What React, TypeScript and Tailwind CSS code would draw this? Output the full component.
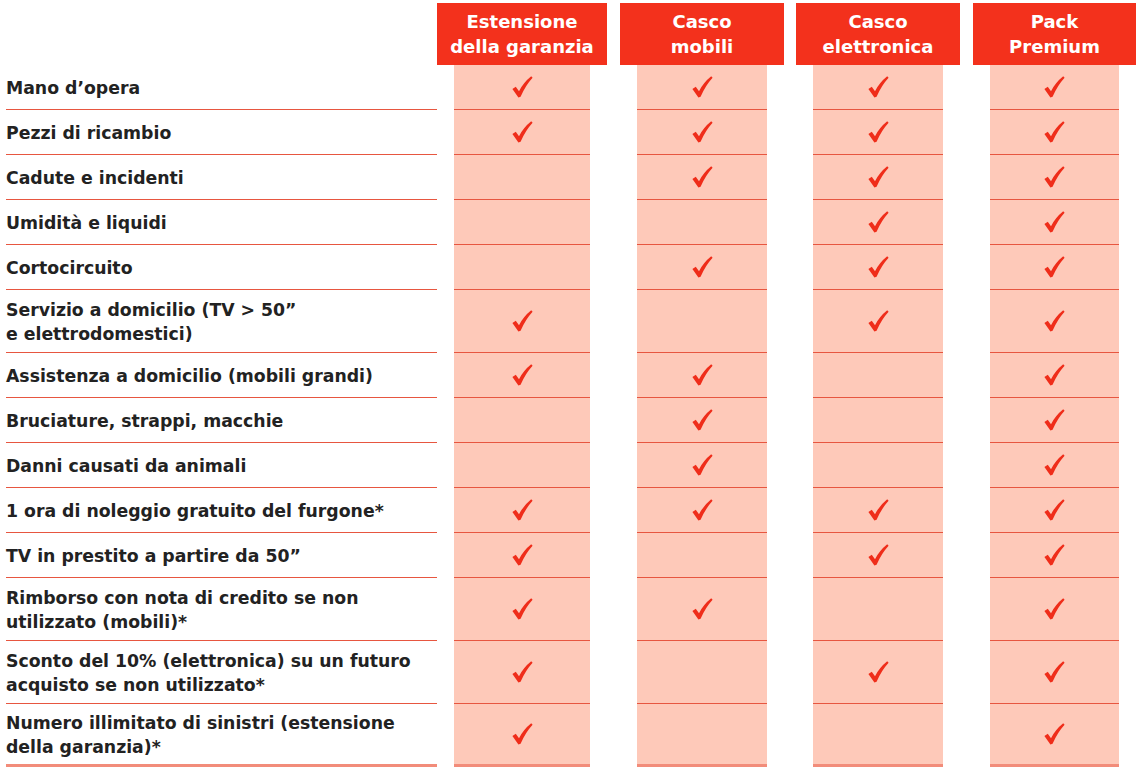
import React from 'react';

const plans = ['Estensione\ndella garanzia', 'Casco\nmobili', 'Casco\nelettronica', 'Pack\nPremium'];

// column wrappers: width + gap before it
const colClass = [
  'w-[170px] ml-0',
  'w-[164px] ml-[13px]',
  'w-[164px] ml-[12px]',
  'w-[163px] ml-[13px]',
];

const rows: { label: string[]; checks: boolean[] }[] = [
  { label: ['Mano d’opera'], checks: [true, true, true, true] },
  { label: ['Pezzi di ricambio'], checks: [true, true, true, true] },
  { label: ['Cadute e incidenti'], checks: [false, true, true, true] },
  { label: ['Umidità e liquidi'], checks: [false, false, true, true] },
  { label: ['Cortocircuito'], checks: [false, true, true, true] },
  {
    label: ['Servizio a domicilio (TV > 50”', 'e elettrodomestici)'],
    checks: [true, false, true, true],
  },
  { label: ['Assistenza a domicilio (mobili grandi)'], checks: [true, true, false, true] },
  { label: ['Bruciature, strappi, macchie'], checks: [false, true, false, true] },
  { label: ['Danni causati da animali'], checks: [false, true, false, true] },
  { label: ['1 ora di noleggio gratuito del furgone*'], checks: [true, true, true, true] },
  { label: ['TV in prestito a partire da 50”'], checks: [true, false, true, true] },
  {
    label: ['Rimborso con nota di credito se non', 'utilizzato (mobili)*'],
    checks: [true, true, false, true],
  },
  {
    label: ['Sconto del 10% (elettronica) su un futuro', 'acquisto se non utilizzato*'],
    checks: [true, false, true, true],
  },
  {
    label: ['Numero illimitato di sinistri (estensione', 'della garanzia)*'],
    checks: [true, false, false, true],
  },
];

const Check = () => (
  <svg width="21" height="22" viewBox="0 0 21 22" className="block">
    <path
      d="M0.4 13 L3.8 10.8 L7 15.2 Q11.4 6.6 19.2 0.3 L20.6 1.8 Q13.4 9.6 8.6 20.8 L6.4 21.6 Z"
      fill="#ef2d1a"
    />
  </svg>
);

export default function App() {
  return (
    <div
      className="w-[1139px] h-[771px] bg-white overflow-hidden text-[#222222]"
      style={{ fontFamily: '"DejaVu Sans", Inter, sans-serif' }}
    >
      {/* header */}
      <div className="flex pt-[3px]">
        <div className="w-[437px] shrink-0" />
        {plans.map((p, i) => (
          <div
            key={i}
            className={`${colClass[i]} shrink-0 h-[62px] bg-[#f3311c] text-white font-bold text-[18px] leading-[25px] text-center flex items-center justify-center whitespace-pre-line`}
          >
            {p}
          </div>
        ))}
      </div>

      {rows.map((r, ri) => {
        const last = ri === rows.length - 1;
        const tall = r.label.length > 1;
        const h = tall ? 'h-[63px]' : 'h-[45px]';
        const border = last ? 'border-b-[3px] border-[#f28c7a]' : 'border-b border-[#e75640]';
        return (
          <div key={ri} className="flex">
            <div
              className={`ml-[6px] w-[431px] shrink-0 ${h} ${border} flex flex-col justify-center pt-px text-[17.3px] font-bold leading-[24px]`}
            >
              {r.label.map((l, li) => (
                <span key={li} className="whitespace-nowrap">
                  {l}
                </span>
              ))}
            </div>
            {r.checks.map((c, ci) => (
              <div key={ci} className={`${colClass[ci]} shrink-0 px-[17px]`}>
                <div className={`${h} ${border} bg-[#fec9b9] flex items-center justify-center`}>
                  {c && <Check />}
                </div>
              </div>
            ))}
          </div>
        );
      })}
    </div>
  );
}
